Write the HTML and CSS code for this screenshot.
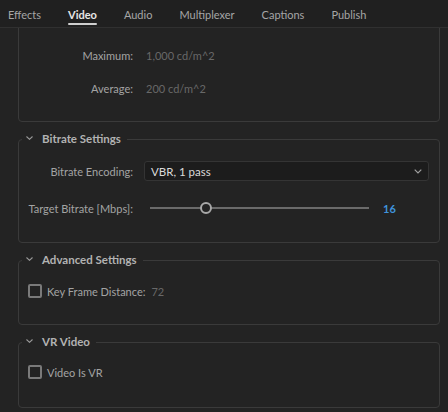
FILE: index.html
```html
<!DOCTYPE html>
<html>
<head>
<meta charset="utf-8">
<link rel="stylesheet" href="styles.css">
</head>
<body>
<div class="tabs">
  <div class="tab">Effects</div>
  <div class="tab active">Video</div>
  <div class="tab">Audio</div>
  <div class="tab">Multiplexer</div>
  <div class="tab">Captions</div>
  <div class="tab">Publish</div>
</div>
<div class="content">
  <fieldset class="group first">
    <div class="rows tight">
      <div class="sub"></div>
      <span class="label">Maximum:</span><span class="value">1,000 cd/m^2</span>
      <span class="label">Average:</span><span class="value">200 cd/m^2</span>
    </div>
  </fieldset>

  <fieldset class="group">
    <legend><svg class="chev" width="7" height="4" viewBox="0 0 7 4"><path d="M0.5 0.5 L3.5 3.3 L6.5 0.5" fill="none" stroke="#9a9a9a" stroke-width="1.1"/></svg>Bitrate Settings</legend>
    <div class="rows bitrate">
      <span class="label">Bitrate Encoding:</span>
      <div class="select"><span>VBR, 1 pass</span><svg width="8" height="5" viewBox="0 0 8 5"><path d="M0.7 0.7 L4 4 L7.3 0.7" fill="none" stroke="#a0a0a0" stroke-width="1.2"/></svg></div>
      <span class="label">Target Bitrate [Mbps]:</span>
      <div class="slider-cell">
        <div class="slider"><div class="track"></div><div class="thumb" style="left: 25.6%"></div></div>
        <span class="num">16</span>
      </div>
    </div>
  </fieldset>

  <fieldset class="group">
    <legend><svg class="chev" width="7" height="4" viewBox="0 0 7 4"><path d="M0.5 0.5 L3.5 3.3 L6.5 0.5" fill="none" stroke="#9a9a9a" stroke-width="1.1"/></svg>Advanced Settings</legend>
    <div class="checks adv">
      <div class="check-row"><span class="box"></span><span class="label">Key Frame Distance:</span><span class="value">72</span></div>
    </div>
  </fieldset>

  <fieldset class="group">
    <legend><svg class="chev" width="7" height="4" viewBox="0 0 7 4"><path d="M0.5 0.5 L3.5 3.3 L6.5 0.5" fill="none" stroke="#9a9a9a" stroke-width="1.1"/></svg>VR Video</legend>
    <div class="checks vr">
      <div class="check-row"><span class="box"></span><span class="label">Video Is VR</span></div>
    </div>
  </fieldset>
</div>
</body>
</html>
```

FILE: styles.css
```css
html, body {
  margin: 0;
  padding: 0;
}
body {
  width: 448px;
  height: 412px;
  overflow: hidden;
  background: #232323;
  font-family: Lato, "Open Sans", sans-serif;
  font-size: 11px;
  color: #a3a3a3;
}

.tabs {
  display: flex;
  gap: 27px;
  padding-left: 8px;
  height: 27px;
  border-bottom: 1px solid #303030;
  background: #202020;
}
.tab {
  position: relative;
  font-size: 11px;
  line-height: 24px;
  padding-top: 3px;
  color: #a6a6a6;
  white-space: nowrap;
}
.tab.active {
  color: #e6e6e6;
  font-weight: bold;
}
.tab.active::after {
  content: "";
  position: absolute;
  left: 0;
  right: 0;
  bottom: 2px;
  height: 2px;
  border-radius: 1px;
  background: #cfcfcf;
}

.content {
  height: 384px;
  overflow: hidden;
}

.group {
  margin: 9px 8px 0 18px;
  padding: 0;
  min-width: 0;
  border: 1px solid #3a3a3a;
  border-radius: 4px;
}
.group.first {
  margin-top: -30px;
}
.group legend {
  display: flex;
  align-items: center;
  gap: 9px;
  height: 16px;
  line-height: 16px;
  margin-left: 3px;
  padding: 0 6px 0 4px;
  font-size: 11.5px;
  font-weight: bold;
  color: #b2b2b2;
}
.chev {
  margin-top: -3px;
}

.rows {
  display: grid;
  grid-template-columns: 105px 1fr;
  column-gap: 11px;
  row-gap: 17px;
  grid-auto-rows: 20px;
  align-items: center;
  padding: 14px 10px 24px 9px;
}
.rows.tight {
  row-gap: 13px;
  padding: 13px 10px 23px 9px;
}
.sub {
  grid-column: 1 / -1;
}
.label {
  text-align: right;
  white-space: nowrap;
  color: #a3a3a3;
}
.value {
  padding-left: 2px;
  color: #686868;
}

.select {
  height: 18px;
  display: flex;
  align-items: center;
  justify-content: space-between;
  padding: 0 6px 0 6px;
  background: #1c1c1c;
  border: 1px solid #343434;
  border-radius: 3px;
  color: #dadada;
  font-size: 11.5px;
}

.slider-cell {
  display: flex;
  align-items: center;
}
.slider {
  position: relative;
  width: 219px;
  height: 12px;
  margin-left: 6px;
}
.track {
  position: absolute;
  left: 0;
  right: 0;
  top: 5px;
  height: 2px;
  background: #6a6a6a;
}
.thumb {
  position: absolute;
  top: 0;
  width: 8px;
  height: 8px;
  margin-left: -6px;
  border: 2px solid #a8a8a8;
  border-radius: 50%;
  background: #232323;
}
.num {
  margin-left: 14px;
  color: #3f93dc;
  font-weight: bold;
}

.checks {
  padding: 13px 10px 23px 9px;
}
.checks.vr {
  padding: 12px 10px 25px 9px;
}
.check-row {
  display: flex;
  align-items: center;
  height: 20px;
}
.check-row .box {
  width: 10px;
  height: 10px;
  border: 2px solid #7a7a7a;
  border-radius: 2px;
  margin-right: 5px;
}
.check-row .label {
  text-align: left;
}
.check-row .value {
  margin-left: 4px;
}
```
